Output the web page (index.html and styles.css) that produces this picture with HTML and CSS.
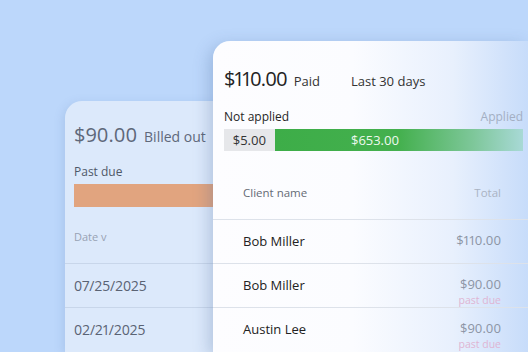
FILE: index.html
```html
<!DOCTYPE html>
<html>
<head>
<meta charset="utf-8">
<link rel="stylesheet" href="styles.css">
</head>
<body>
<div class="stage">
  <section class="card back">
    <div class="headline">
      <span class="amount">$90.00</span>
      <span class="label">Billed out</span>
    </div>
    <div class="sub">Past due</div>
    <div class="orange-bar"></div>
    <div class="thead"><span>Date v</span></div>
    <div class="row"><span>07/25/2025</span></div>
    <div class="row"><span>02/21/2025</span></div>
  </section>

  <section class="card front">
    <div class="headline">
      <span class="amount">$110.00</span>
      <span class="label">Paid</span>
      <span class="range">Last 30 days</span>
    </div>
    <div class="legend">
      <span>Not applied</span>
      <span class="applied">Applied</span>
    </div>
    <div class="bar">
      <div class="seg-gray">$5.00</div>
      <div class="seg-green">$653.00</div>
    </div>
    <div class="thead">
      <span>Client name</span>
      <span class="total-h">Total</span>
    </div>
    <div class="row">
      <span class="name">Bob Miller</span>
      <div class="money"><span class="amt">$110.00</span></div>
    </div>
    <div class="row">
      <span class="name">Bob Miller</span>
      <div class="money"><span class="amt">$90.00</span><span class="due">past due</span></div>
    </div>
    <div class="row">
      <span class="name">Austin Lee</span>
      <div class="money"><span class="amt">$90.00</span><span class="due">past due</span></div>
    </div>
  </section>
</div>
</body>
</html>
```

FILE: styles.css
```css
* { box-sizing: border-box; }
html, body {
  margin: 0;
  padding: 0;
}
body {
  width: 528px;
  height: 352px;
  overflow: hidden;
  background: #bcd7fb;
  font-family: "Open Sans", "DejaVu Sans", sans-serif;
  font-variant-numeric: proportional-nums;
}
.stage {
  position: relative;
  width: 528px;
  height: 352px;
  overflow: hidden;
}
.card {
  position: absolute;
}

/* back card */
.back {
  left: 65px;
  top: 101px;
  width: 200px;
  height: 251px;
  background: #dce9fb;
  border-radius: 17px 0 0 0;
  box-shadow: -2px 2px 10px rgba(90, 120, 170, 0.18);
  padding-top: 20px;
  overflow: hidden;
}
.back .headline {
  display: flex;
  align-items: baseline;
  gap: 7px;
  padding-left: 9px;
  height: 28px;
  line-height: 28px;
}
.back .amount {
  font-size: 20px;
  color: #5f687a;
}
.back .label {
  font-size: 14px;
  color: #5f687a;
}
.back .sub {
  margin-top: 15px;
  padding-left: 9px;
  font-size: 12px;
  line-height: 16px;
  color: #4f5868;
}
.back .orange-bar {
  margin: 4px 0 0 9px;
  height: 23px;
  background: #e1a47f;
}
.back .thead {
  padding: 22px 0 18px 9px;
  font-size: 11px;
  line-height: 16px;
  color: #98a2b4;
}
.back .row {
  height: 44px;
  border-top: 1px solid #c8d6ea;
  padding: 12px 0 0 9px;
  font-size: 14px;
  line-height: 20px;
  color: #5a6374;
}

/* front card */
.front {
  left: 213px;
  top: 41px;
  width: 315px;
  height: 311px;
  overflow: hidden;
  border-radius: 17px 0 0 0;
  background: linear-gradient(90deg, #fdfdff 0px, #fbfcff 140px, #e8f0fd 240px, #c7dcfa 315px);
  box-shadow: -4px 4px 16px rgba(70, 100, 150, 0.28);
  padding-top: 24px;
}
.front .headline {
  display: flex;
  align-items: baseline;
  padding-left: 11px;
  height: 28px;
  line-height: 28px;
  color: #232323;
}
.front .amount {
  font-size: 20px;
  letter-spacing: -0.9px;
}
.front .label {
  font-size: 13px;
  margin-left: 7px;
  color: #333;
}
.front .range {
  font-size: 13px;
  margin-left: 31px;
  color: #333;
}
.legend {
  margin-top: 16px;
  display: flex;
  justify-content: space-between;
  padding: 0 5px 0 11px;
  font-size: 12px;
  line-height: 16px;
  color: #262626;
}
.legend .applied {
  color: #a3afc3;
}
.bar {
  margin: 4px 5px 0 11px;
  height: 22px;
  display: flex;
  font-size: 13px;
  line-height: 22px;
}
.seg-gray {
  width: 51px;
  background: #e6e7ea;
  color: #333;
  text-align: center;
}
.seg-green {
  flex: 1;
  background: linear-gradient(90deg, #3dad48 0%, #44b04e 50%, #7ec79a 80%, #a8d9d6 100%);
  color: #eef9ee;
  padding-left: 76px;
}
.front .thead {
  display: flex;
  justify-content: space-between;
  padding: 34px 27px 18px 30px;
  font-size: 11.5px;
  line-height: 16px;
  color: #656b75;
}
.front .total-h {
  color: #aab3c3;
}
.front .row {
  height: 44px;
  border-top: 1px solid #dde2ea;
  padding: 12px 27px 0 30px;
  display: flex;
  justify-content: space-between;
  align-items: flex-start;
}
.name {
  font-size: 13px;
  line-height: 16px;
  margin-top: 1px;
  color: #222;
}
.money {
  display: flex;
  flex-direction: column;
  align-items: flex-end;
}
.amt {
  font-size: 13px;
  line-height: 16px;
  color: #8c95a5;
}
.due {
  font-size: 10.5px;
  line-height: 10px;
  margin-top: 3px;
  color: #dfb5d3;
}
```
